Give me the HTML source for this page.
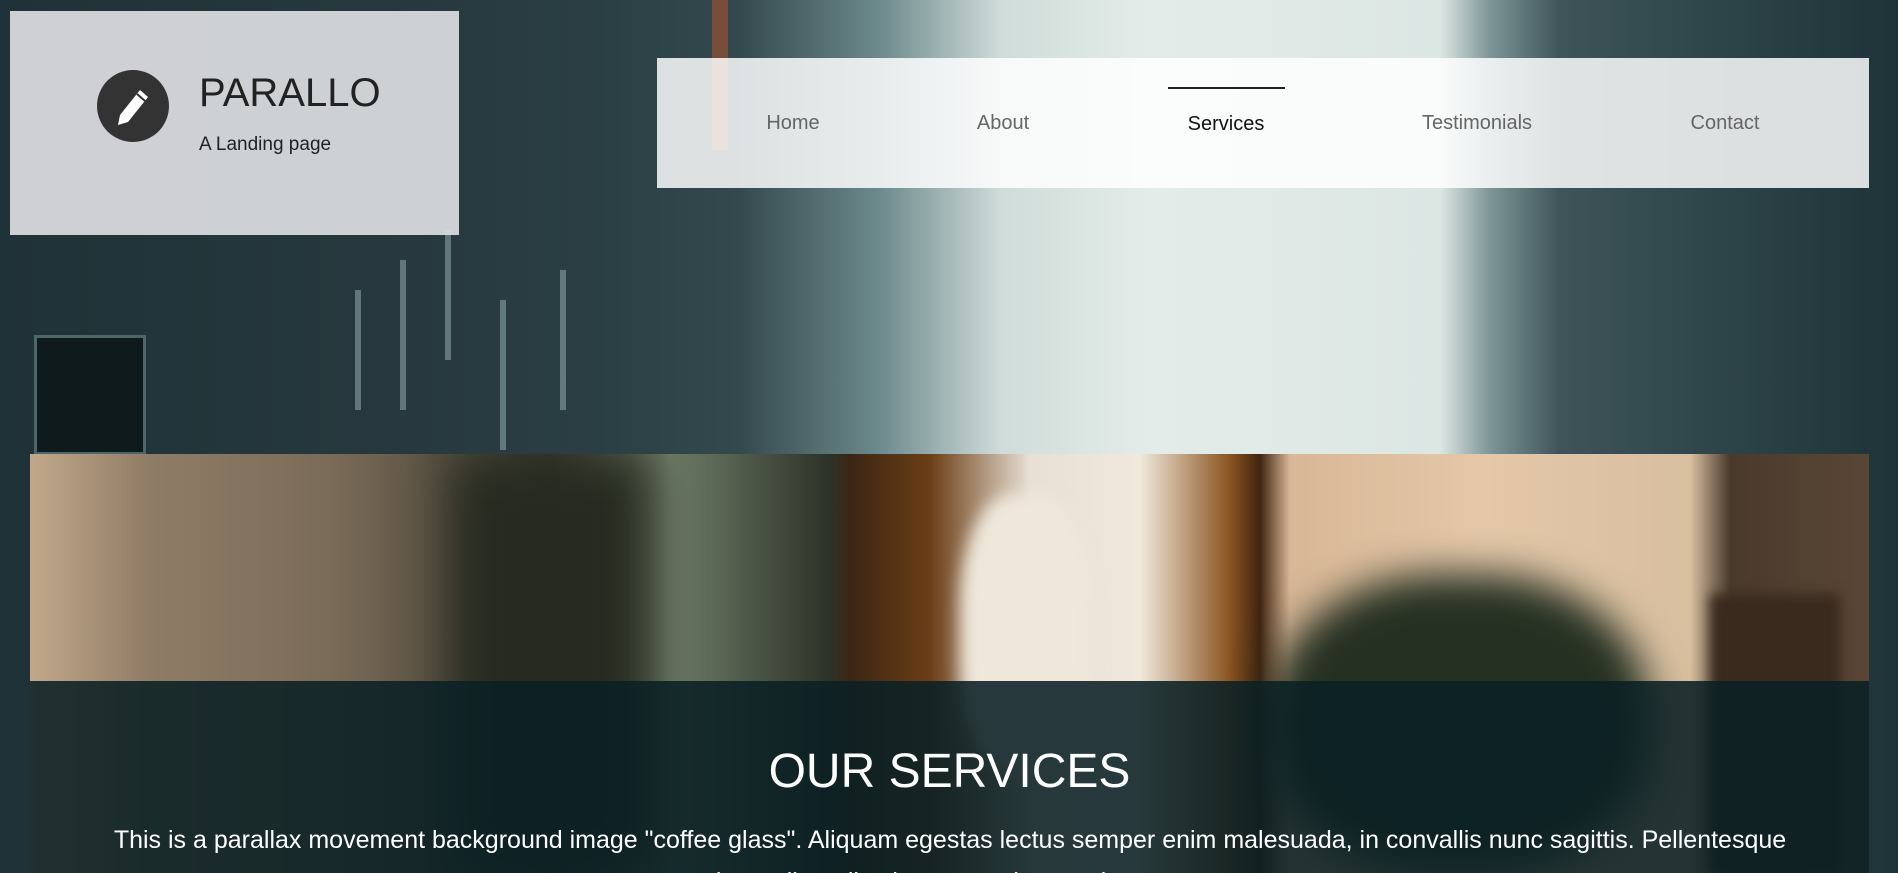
<!DOCTYPE html>
<html><head><meta charset="utf-8"><style>
*{margin:0;padding:0;box-sizing:border-box}
html,body{width:1898px;height:873px;overflow:hidden}
body{position:relative;font-family:"Liberation Sans",Arial,sans-serif;background:#1e3338}
.bg{position:absolute;left:0;top:0;width:1898px;height:873px;
background:
linear-gradient(90deg,#1f3237 0,#23363b 230px,#27393e 420px,#2a3f44 600px,#34494e 740px,#6d8a8c 880px,#cfdcd9 1000px,#e4ece9 1150px,#dce6e3 1440px,#7e9597 1490px,#3e5459 1560px,#2f464b 1700px,#1e3338 1898px);}
.win{position:absolute;width:6px;background:#8fa9ad;opacity:.55}
.nav{position:absolute;left:657px;top:58px;width:1212px;height:130px;background:rgba(255,255,255,.84)}
.nav a{position:absolute;top:54px;font-size:20px;color:#666;text-decoration:none;transform:translateX(-50%);white-space:nowrap}
.logo{position:absolute;left:10px;top:11px;width:449px;height:224px;background:rgba(220,221,223,.93)}
.coffee{position:absolute;left:30px;top:454px;width:1839px;height:419px;overflow:hidden;
background:linear-gradient(90deg,#c2a88a 0,#8f7c66 120px,#7a6b58 300px,#3a3a2e 520px,#6f7d68 640px,#2c3228 800px,#3b2614 820px,#6b3e16 900px,#e8e0d4 1000px,#f0e8dc 1110px,#8a5420 1200px,#402510 1230px,#d8b796 1260px,#e4c8a8 1450px,#d8bfa0 1660px,#4a3a2c 1700px,#5a4636 1839px)}
.band{position:absolute;left:0;top:227px;width:1839px;height:192px;background:rgba(10,32,36,.88)}
</style></head><body>
<div class="bg"></div>
<div class="win" style="left:355px;top:290px;height:120px"></div>
<div class="win" style="left:400px;top:260px;height:150px"></div>
<div class="win" style="left:445px;top:230px;height:130px"></div>
<div class="win" style="left:500px;top:300px;height:150px"></div>
<div class="win" style="left:560px;top:270px;height:140px"></div>
<div style="position:absolute;left:34px;top:335px;width:112px;height:120px;background:#0e1a1c;border:3px solid #4d6668"></div>
<div style="position:absolute;left:712px;top:0;width:16px;height:150px;background:#b0502c;opacity:.55"></div>
<div class="logo">
 <div style="position:absolute;left:87px;top:59px;width:72px;height:72px;border-radius:50%;background:#333"></div>
 <svg style="position:absolute;left:104px;top:75px" width="40" height="42" viewBox="0 0 40 42"><path d="M26 4 L34 11 L14 36 L4 39 L6 29 Z" fill="#fff"/><path d="M23 8 L31 15" stroke="#333" stroke-width="2"/></svg>
 <div style="position:absolute;left:189px;top:60px;font-size:40px;color:#222">PARALLO</div>
 <div style="position:absolute;left:189px;top:123px;font-size:19px;color:#222">A Landing page</div>
</div>
<div class="nav">
 <div style="position:absolute;left:511px;top:29px;width:117px;height:2px;background:#222"></div>
 <a style="left:136px">Home</a>
 <a style="left:346px">About</a>
 <a style="left:569px;color:#111;top:55px">Services</a>
 <a style="left:820px">Testimonials</a>
 <a style="left:1068px">Contact</a>
</div>
<div class="coffee">
 <div style="position:absolute;left:1240px;top:120px;width:380px;height:300px;border-radius:45%;background:#253022;filter:blur(20px)"></div>
 <div style="position:absolute;left:420px;top:0;width:200px;height:420px;background:#262a20;filter:blur(25px)"></div>
 <div style="position:absolute;left:930px;top:40px;width:130px;height:280px;border-radius:40%;background:#efe7da;filter:blur(8px)"></div>
 <div style="position:absolute;left:1680px;top:140px;width:130px;height:280px;background:#3a2a1e;filter:blur(6px)"></div>
 <div class="band"></div>
 <div style="position:absolute;left:0;top:290px;width:1839px;text-align:center;font-size:48px;color:#fff">OUR SERVICES</div>
 <div style="position:absolute;left:60px;top:365px;width:1720px;text-align:center;font-size:25px;line-height:42px;color:#fff">This is a parallax movement background image "coffee glass". Aliquam egestas lectus semper enim malesuada, in convallis nunc sagittis. Pellentesque imperdiet odio vitae tortor rhoncus laoreet.</div>
</div>
</body></html>
